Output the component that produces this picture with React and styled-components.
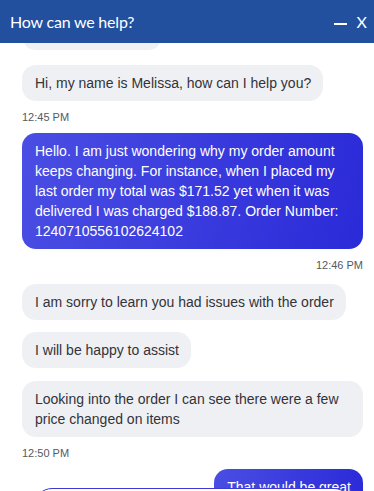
import React from 'react';
import styled, { createGlobalStyle } from 'styled-components';

const GlobalStyle = createGlobalStyle`
  html, body {
    margin: 0;
    padding: 0;
    background: #ffffff;
  }
`;

const Widget = styled.div`
  position: relative;
  width: 374px;
  height: 491px;
  display: flex;
  flex-direction: column;
  overflow: hidden;
  background: #ffffff;
  font-family: 'Liberation Sans', Arial, sans-serif;
`;

const Header = styled.div`
  position: relative;
  z-index: 2;
  height: 43px;
  flex-shrink: 0;
  display: flex;
  align-items: center;
  justify-content: space-between;
  padding: 0 7px 0 10px;
  background: #234f9f;
  color: #ffffff;
`;

const Title = styled.div`
  font-family: Lato, 'Open Sans', sans-serif;
  font-size: 16px;
  letter-spacing: -0.2px;
`;

const Controls = styled.div`
  display: flex;
  align-items: center;
  gap: 10px;
`;

const Minimize = styled.span`
  display: block;
  width: 13px;
  height: 2px;
  margin-top: 4px;
  background: #ffffff;
`;

const Close = styled.span`
  font-family: Lato, 'Open Sans', sans-serif;
  font-size: 16px;
  line-height: 1;
`;

const Thread = styled.div`
  flex: 1;
  overflow: hidden;
  display: flex;
  flex-direction: column;
  padding: 0 11px 0 22px;
  margin-top: -14px;
`;

const Bubble = styled.div`
  flex-shrink: 0;
  align-self: ${(p) => (p.mine ? 'flex-end' : 'flex-start')};
  max-width: 341px;
  box-sizing: border-box;
  padding: 8px 12px 8px 13px;
  margin-top: ${(p) => p.gap ?? 12}px;
  border-radius: 14px;
  font-size: 14px;
  line-height: 20px;
  color: ${(p) => (p.mine ? '#ffffff' : '#333338')};
  background: ${(p) =>
    p.mine ? 'linear-gradient(100deg, #4a4ee3 0%, #2b2ad8 100%)' : '#eff0f4'};
  ${(p) => p.ghost && `width: 136px; height: 21px; margin-left: 2px; padding: 0;`}
`;

const Stamp = styled.div`
  flex-shrink: 0;
  align-self: ${(p) => (p.mine ? 'flex-end' : 'flex-start')};
  margin-top: 9px;
  font-size: 11px;
  line-height: 14px;
  color: #555a60;
`;

const Composer = styled.div`
  position: absolute;
  left: 34px;
  right: 22px;
  top: 488px;
  height: 40px;
  border: 1px solid #3a3ad2;
  border-radius: 18px;
  background: #ffffff;
`;

const App = () => {
  return (
    <>
      <GlobalStyle />
      <Widget>
        <Header>
          <Title>How can we help?</Title>
          <Controls>
            <Minimize />
            <Close>X</Close>
          </Controls>
        </Header>
        <Thread>
          <Bubble ghost gap={0} />
          <Bubble gap={15}>Hi, my name is Melissa, how can I help you?</Bubble>
          <Stamp>12:45 PM</Stamp>
          <Bubble mine gap={9}>
            Hello. I am just wondering why my order amount keeps changing. For instance, when I
            placed my last order my total was $171.52 yet when it was delivered I was charged
            $188.87. Order Number: 1240710556102624102
          </Bubble>
          <Stamp mine>12:46 PM</Stamp>
          <Bubble gap={12}>I am sorry to learn you had issues with the order</Bubble>
          <Bubble>I will be happy to assist</Bubble>
          <Bubble gap={13}>Looking into the order I can see there were a few price changed on items</Bubble>
          <Stamp>12:50 PM</Stamp>
          <Bubble mine gap={9}>That would be great</Bubble>
        </Thread>
        <Composer />
      </Widget>
    </>
  );
};

export default App;
